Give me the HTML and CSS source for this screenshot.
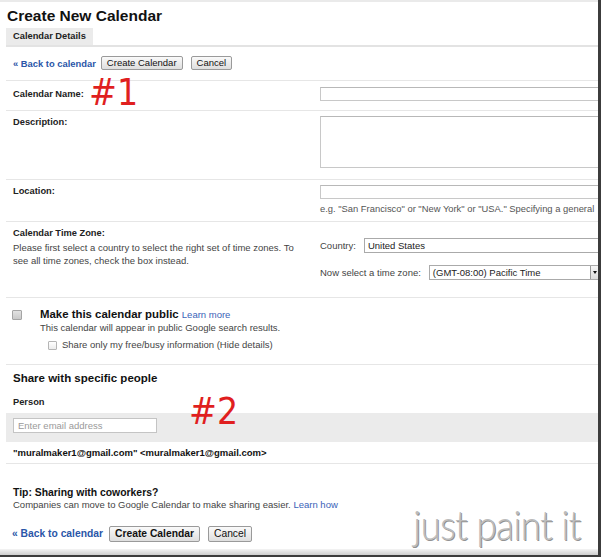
FILE: index.html
```html
<!DOCTYPE html>
<html>
<head>
<meta charset="utf-8">
<title>Create New Calendar</title>
<link rel="stylesheet" href="styles.css">
</head>
<body>
<div class="shot">
  <div class="page">
    <div class="topline"></div>
    <h1 class="title">Create New Calendar</h1>
    <div class="tabbar"><span class="tab">Calendar Details</span></div>

    <div class="actions">
      <a class="back" href="#">« Back to calendar</a>
      <button class="btn">Create Calendar</button>
      <button class="btn">Cancel</button>
    </div>

    <div class="row name-row">
      <div class="label">Calendar Name:</div>
      <div class="field"><div class="input"></div></div>
    </div>

    <div class="row desc-row">
      <div class="label">Description:</div>
      <div class="field"><div class="input textarea"></div></div>
    </div>

    <div class="row loc-row">
      <div class="label">Location:</div>
      <div class="field">
        <div class="input"></div>
        <div class="hint">e.g. "San Francisco" or "New York" or "USA." Specifying a general</div>
      </div>
    </div>

    <div class="row tz-row">
      <div class="labelcol">
        <div class="label">Calendar Time Zone:</div>
        <div class="desc">Please first select a country to select the right set of time zones. To see all time zones, check the box instead.</div>
      </div>
      <div class="field">
        <div class="selrow country"><span class="sellabel">Country:</span><div class="select">United States</div></div>
        <div class="selrow zone"><span class="sellabel">Now select a time zone:</span><div class="select zone-select">(GMT-08:00) Pacific Time<span class="arrow"></span></div></div>
      </div>
    </div>

    <div class="public-row">
      <span class="check big"></span>
      <div class="public-text">
        <div class="public-title"><b>Make this calendar public</b> <a href="#" class="small-link">Learn more</a></div>
        <div class="public-desc">This calendar will appear in public Google search results.</div>
        <div class="subcheck"><span class="check small"></span><span>Share only my free/busy information (Hide details)</span></div>
      </div>
    </div>

    <div class="share">
      <div class="share-title">Share with specific people</div>
      <div class="person">Person</div>
      <div class="band"><div class="email-input">Enter email address</div></div>
      <div class="email-row">"muralmaker1@gmail.com" &lt;muralmaker1@gmail.com&gt;</div>
    </div>

    <div class="tip">
      <div class="tip-title">Tip: Sharing with coworkers?</div>
      <div class="tip-text">Companies can move to Google Calendar to make sharing easier. <a href="#" class="small-link">Learn how</a></div>
    </div>

    <div class="actions bottom">
      <a class="back" href="#">« Back to calendar</a>
      <button class="btn strong">Create Calendar</button>
      <button class="btn">Cancel</button>
    </div>
    <div class="shadowband"></div>
  </div>

  <div class="mark mark1">#1</div>
  <div class="mark mark2">#2</div>
  <div class="watermark">just paint it</div>
</div>
</body>
</html>
```

FILE: styles.css
```css
* { box-sizing: border-box; }
html, body { margin: 0; padding: 0; background: #fff; }
body {
  font-family: "Liberation Sans", Arial, sans-serif;
  font-size: 9.5px;
  color: #222;
}
.shot {
  position: relative;
  width: 601px;
  height: 557px;
  overflow: hidden;
  border-right: 3px solid #3c3c3c;
  border-bottom: 2px solid #3c3c3c;
  background: #fff;
}
.page {
  display: flex;
  flex-direction: column;
  padding-left: 6px;
}
.topline { height: 2px; background: #eaeaea; margin-left: -6px; }
.title {
  margin: 4px 0 2px 1px;
  font-size: 15.5px;
  line-height: 20px;
  font-weight: bold;
  color: #111;
}
.tabbar {
  display: flex;
  border-bottom: 2px solid #e3e3e3;
}
.tab {
  display: block;
  height: 17px;
  line-height: 17px;
  padding: 0 7px;
  background: #ebebeb;
  font-weight: bold;
  font-size: 9.3px;
  color: #222;
}
.actions {
  display: flex;
  align-items: center;
  padding: 9px 0 10px 7px;
  border-bottom: 1px solid #e6e6e6;
}
.back {
  color: #2a56a8;
  text-decoration: none;
  font-weight: bold;
  font-size: 9.4px;
  margin-right: 5px;
}
.btn {
  font-family: "Liberation Sans", Arial, sans-serif;
  font-size: 9.5px;
  height: 14px;
  line-height: 12px;
  padding: 0 5px;
  margin: 0 8px 0 0;
  border: 1px solid #9a9a9a;
  border-radius: 2px;
  background: linear-gradient(#fafafa, #dedede);
  color: #111;
}
.row {
  display: grid;
  grid-template-columns: 307px 1fr;
  padding-left: 7px;
  border-bottom: 1px solid #e6e6e6;
}
.label {
  font-weight: bold;
  font-size: 9.3px;
  line-height: 12px;
  color: #222;
}
.field { min-width: 0; }
.input {
  width: 300px;
  height: 14px;
  border: 1px solid #c8c8c8;
  border-top-color: #b8b8b8;
  background: #fff;
}
.name-row { padding-top: 6px; padding-bottom: 9px; }
.name-row .label { margin-top: 1px; }
.desc-row { padding-top: 5px; padding-bottom: 11px; }
.textarea { height: 52px; }
.loc-row { padding-top: 5px; padding-bottom: 6px; }
.hint {
  margin-top: 4px;
  line-height: 12px;
  white-space: nowrap;
  color: #555;
  font-size: 9.4px;
}
.tz-row { padding-top: 5px; padding-bottom: 17px; }
.desc {
  margin-top: 1.5px;
  line-height: 13px;
  color: #444;
  max-width: 287px;
}
.selrow {
  display: flex;
  align-items: center;
  color: #444;
}
.country { margin-top: 11px; }
.zone { margin-top: 12px; }
.sellabel { margin-right: 8px; white-space: nowrap; }
.select {
  position: relative;
  flex: 0 0 auto;
  width: 240px;
  height: 15px;
  line-height: 13px;
  border: 1px solid #aaa;
  padding-left: 3px;
  color: #222;
  white-space: nowrap;
}
.zone-select { width: 171px; }
.arrow {
  position: absolute;
  right: 0;
  top: 0;
  width: 9px;
  height: 13px;
  border-left: 1px solid #999;
  background: linear-gradient(#f6f6f6, #dcdcdc);
}
.arrow::after {
  content: "";
  position: absolute;
  left: 2px;
  top: 5px;
  border-left: 2.5px solid transparent;
  border-right: 2.5px solid transparent;
  border-top: 3px solid #111;
}
.public-row {
  display: flex;
  padding: 9px 0 13px 6px;
  border-bottom: 1px solid #e6e6e6;
}
.check {
  display: block;
  flex: 0 0 auto;
  border: 1px solid #a5a5a5;
  border-radius: 1px;
}
.check.big {
  width: 10px;
  height: 10px;
  margin-top: 3px;
  margin-right: 18px;
  background: linear-gradient(#e2e2e2, #c9c9c9);
}
.check.small {
  width: 9px;
  height: 9px;
  margin-right: 5px;
  background: linear-gradient(#fff, #ececec);
  border-color: #b5b5b5;
}
.public-title {
  font-size: 11.4px;
  line-height: 14px;
}
.public-title b { color: #111; }
.small-link {
  color: #3a63b8;
  text-decoration: none;
  font-size: 9.5px;
  font-weight: normal;
}
.public-desc { line-height: 12px; color: #444; }
.subcheck {
  display: flex;
  align-items: center;
  margin-top: 5px;
  margin-left: 8px;
  line-height: 12px;
  color: #444;
}
.share {
  display: flex;
  flex-direction: column;
  padding: 6px 0 4px 0;
  border-bottom: 1px solid #e6e6e6;
}
.share-title {
  padding-left: 7px;
  font-size: 11.5px;
  line-height: 14px;
  font-weight: bold;
  color: #111;
}
.person {
  padding-left: 7px;
  margin-top: 11px;
  font-weight: bold;
  font-size: 9.3px;
  line-height: 12px;
}
.band {
  margin-top: 5px;
  height: 29px;
  padding: 5px 0 0 7px;
  background: #ebebeb;
}
.email-input {
  width: 144px;
  height: 15px;
  line-height: 13px;
  padding-left: 4px;
  border: 1px solid #c4c4c4;
  background: #fff;
  color: #9a9a9a;
}
.email-row {
  padding-left: 7px;
  margin-top: 5px;
  line-height: 12px;
  font-weight: bold;
  color: #111;
}
.tip { padding: 21.5px 0 0 7px; }
.tip-title {
  font-weight: bold;
  font-size: 10.4px;
  line-height: 13px;
  color: #111;
}
.tip-text { line-height: 12px; color: #444; }
.actions.bottom {
  border-bottom: none;
  padding: 15px 0 7px 6px;
}
.bottom .back { font-size: 10.3px; margin-right: 6px; }
.bottom .btn {
  font-size: 10.3px;
  height: 16px;
  line-height: 14px;
  padding: 0 5px;
}
.btn.strong { font-weight: bold; }
.shadowband {
  margin-left: -6px;
  height: 7px;
  background: linear-gradient(#f4f4f4, #c8c8c8);
}
.mark {
  position: absolute;
  color: #e01f1f;
  font-family: "DejaVu Sans Condensed", "DejaVu Sans", sans-serif;
  font-size: 37px;
  line-height: 1;
}
.mark1 { left: 89px; top: 74px; }
.mark2 { left: 189px; top: 393px; }
.watermark {
  position: absolute;
  left: 413px;
  top: 503px;
  font-family: Lato, "Open Sans", sans-serif;
  font-weight: 300;
  font-size: 42px;
  line-height: 1;
  color: #bcbcbc;
  letter-spacing: -1px;
  text-shadow: 1px 1px 0 #929292, -1px -1px 0 #fff;
  transform: scaleX(0.89);
  transform-origin: left top;
  white-space: nowrap;
}
```
